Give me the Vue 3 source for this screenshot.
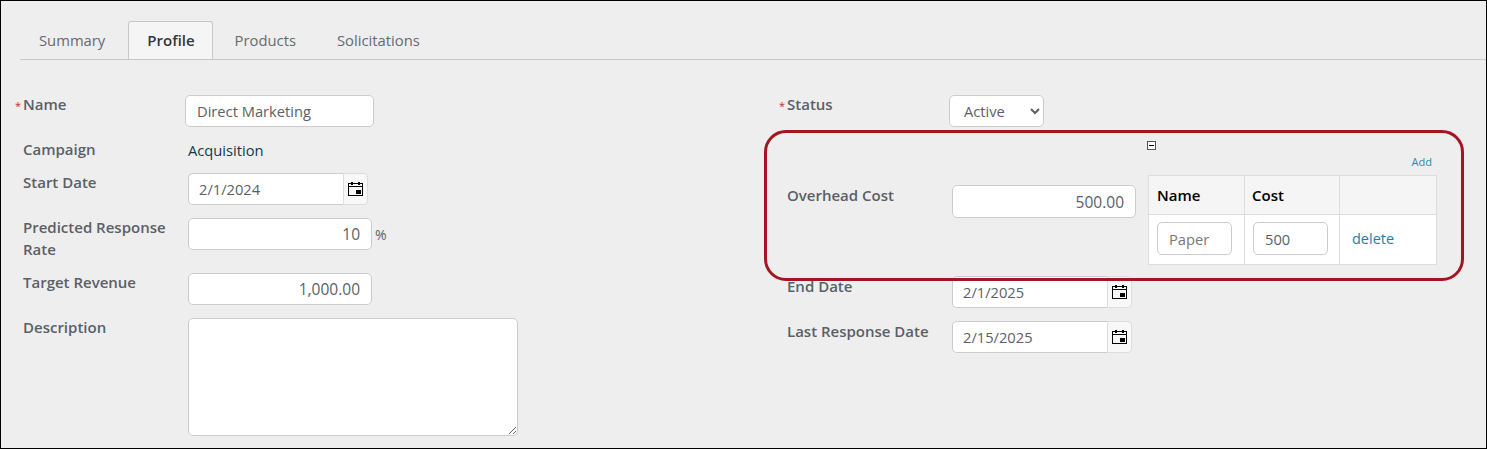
<script setup>
const rows = [{ name: 'Paper', cost: '500' }]
</script>

<template>
  <div class="frame">
    <nav class="tabs">
      <a class="tab">Summary</a>
      <a class="tab active">Profile</a>
      <a class="tab">Products</a>
      <a class="tab">Solicitations</a>
    </nav>
    <div class="form">
      <section class="col left">
        <div class="row">
          <label class="lbl req"><span class="star">*</span>Name</label>
          <input class="inp name-inp shift" value="Direct Marketing" />
        </div>
        <div class="row short">
          <label class="lbl">Campaign</label>
          <span class="static">Acquisition</span>
        </div>
        <div class="row">
          <label class="lbl">Start Date</label>
          <div class="date">
            <input class="inp" value="2/1/2024" />
            <button class="cal">
              <svg width="15" height="16" viewBox="0 0 15 16" fill="none" shape-rendering="crispEdges">
                <path d="M.5 2.5h14v12H.5z" stroke="#000" />
                <path d="M0 5.5h15" stroke="#000" />
                <path d="M3 1h2v3H3zM10 1h2v3h-2z" fill="#000" />
                <rect x="8" y="9" width="5" height="4" fill="#000" />
              </svg>
            </button>
          </div>
        </div>
        <div class="row">
          <label class="lbl">Predicted Response Rate</label>
          <input class="inp num w184" value="10" />
          <span class="pct">%</span>
        </div>
        <div class="row">
          <label class="lbl">Target Revenue</label>
          <input class="inp num w184" value="1,000.00" />
        </div>
        <div class="row">
          <label class="lbl">Description</label>
          <textarea class="area"></textarea>
        </div>
      </section>

      <section class="col right">
        <div class="row">
          <label class="lbl req"><span class="star">*</span>Status</label>
          <select class="sel shift">
            <option>Active</option>
            <option>Inactive</option>
          </select>
        </div>
        <div class="row overhead">
          <label class="lbl oh-lbl">Overhead Cost</label>
          <input class="inp num w184 oh-inp" value="500.00" />
          <div class="sub">
            <span class="toggle"></span>
            <a class="add">Add</a>
            <table class="grid">
              <thead>
                <tr><th class="c1">Name</th><th class="c2">Cost</th><th></th></tr>
              </thead>
              <tbody>
                <tr v-for="r in rows" :key="r.name">
                  <td><input class="inp cell" :placeholder="r.name" /></td>
                  <td><input class="inp cell" :value="r.cost" /></td>
                  <td class="del-cell"><a class="del">delete</a></td>
                </tr>
              </tbody>
            </table>
          </div>
        </div>
        <div class="row">
          <label class="lbl">End Date</label>
          <div class="date raised">
            <input class="inp" value="2/1/2025" />
            <button class="cal">
              <svg width="15" height="16" viewBox="0 0 15 16" fill="none" shape-rendering="crispEdges">
                <path d="M.5 2.5h14v12H.5z" stroke="#000" />
                <path d="M0 5.5h15" stroke="#000" />
                <path d="M3 1h2v3H3zM10 1h2v3h-2z" fill="#000" />
                <rect x="8" y="9" width="5" height="4" fill="#000" />
              </svg>
            </button>
          </div>
        </div>
        <div class="row">
          <label class="lbl">Last Response Date</label>
          <div class="date raised">
            <input class="inp" value="2/15/2025" />
            <button class="cal">
              <svg width="15" height="16" viewBox="0 0 15 16" fill="none" shape-rendering="crispEdges">
                <path d="M.5 2.5h14v12H.5z" stroke="#000" />
                <path d="M0 5.5h15" stroke="#000" />
                <path d="M3 1h2v3H3zM10 1h2v3h-2z" fill="#000" />
                <rect x="8" y="9" width="5" height="4" fill="#000" />
              </svg>
            </button>
          </div>
        </div>
      </section>
    </div>
    <div class="callout"></div>
  </div>
</template>

<style scoped>
.frame {
  position: relative;
  box-sizing: border-box;
  width: 1487px;
  height: 449px;
  overflow: hidden;
  background: #eeeeee;
  border: 1px solid #000;
  font-family: "Open Sans", sans-serif;
  font-size: 15px;
  color: #5a5f68;
}
.tabs {
  display: flex;
  gap: 3px;
  margin: 20px 0 0 19px;
  height: 38px;
  border-bottom: 1px solid #c8c8c8;
}
.tab {
  box-sizing: border-box;
  height: 38px;
  padding: 0 18px;
  line-height: 36px;
  font-size: 14.8px;
  color: #666a70;
  border: 1px solid transparent;
  border-bottom: 0;
}
.tab.active {
  margin-left: 1px;
  padding-right: 17px;
  font-size: 15px;
  font-weight: 600;
  color: #33363a;
  background: #f5f5f5;
  border-color: #c8c8c8;
  border-radius: 3px 3px 0 0;
}
.form {
  display: flex;
  padding: 35px 0 0 22px;
}
.col.left { width: 764px; }
.col.right { flex: 1; }
.row {
  display: flex;
  align-items: flex-start;
  margin-bottom: 13px;
}
.row.short { height: 20px; }
.lbl {
  flex: 0 0 165px;
  box-sizing: border-box;
  width: 165px;
  margin: -2px 0 0;
  padding-right: 20px;
  font-weight: 600;
  line-height: 22px;
  color: #5a5f68;
  position: relative;
}
.req { line-height: 19px; margin: 0; }
.star {
  position: absolute;
  left: -8px;
  top: 1px;
  color: #e0202a;
  font-weight: 400;
  font-size: 11px;
}
.static {
  line-height: 20px;
  font-size: 14.7px;
  color: #123b4a;
}
.inp {
  box-sizing: border-box;
  height: 32px;
  width: 154px;
  padding: 0 11px;
  border: 1px solid #cccccc;
  border-radius: 5px;
  background: #fff;
  font: 14.7px "Open Sans", sans-serif;
  color: #5a5f68;
  outline: none;
}
.shift { margin-left: -3px; }
.name-inp { width: 189px; }
.num { text-align: right; font-size: 15.5px; }
.w184 { width: 184px; }
.date { display: flex; width: 180px; }
.date.raised { margin: -1px 0 1px; }
.date .inp {
  flex: 1;
  min-width: 0;
  padding-left: 10px;
  border-right: 0;
  border-radius: 5px 0 0 5px;
}
.cal {
  box-sizing: border-box;
  width: 25px;
  height: 32px;
  padding: 0;
  display: flex;
  align-items: center;
  justify-content: center;
  background: #f8f8f8;
  border: 1px solid #ddd;
  border-radius: 0 4px 4px 0;
}
.pct { margin: 7px 0 0 3px; font-size: 14px; line-height: 20px; }
.area {
  box-sizing: border-box;
  display: block;
  width: 330px;
  height: 118px;
  border: 1px solid #cccccc;
  border-radius: 5px;
  background: #fff;
  outline: none;
}
.sel {
  box-sizing: border-box;
  width: 95px;
  height: 32px;
  padding: 0 0 0 10px;
  border: 1px solid #cccccc;
  border-radius: 5px;
  background: #fff;
  font: 14.7px "Open Sans", sans-serif;
  color: #5a5f68;
  outline: none;
}
.overhead {
  position: relative;
  height: 125px;
  margin-bottom: 12px;
}
.oh-lbl { margin-top: 44px; }
.oh-inp { margin-top: 45px; height: 33px; }
.sub {
  display: flex;
  flex-direction: column;
  width: 289px;
  margin-left: 12px;
}
.toggle {
  position: relative;
  box-sizing: border-box;
  display: block;
  width: 9px;
  height: 9px;
  margin-top: 1px;
  margin-left: -1px;
  border: 1px solid #555;
  background: #fff;
}
.toggle::after {
  content: "";
  position: absolute;
  left: 1px;
  right: 1px;
  top: 3px;
  height: 1px;
  background: #000;
}
.add {
  align-self: flex-end;
  margin: 6px 5px 0 0;
  height: 19px;
  font-size: 11px;
  line-height: 12px;
  color: #2d8bab;
}
.grid {
  width: 289px;
  height: 90px;
  border-collapse: collapse;
  table-layout: fixed;
  background: #fff;
}
.grid th, .grid td { border: 1px solid #dddddd; padding: 0 8px; text-align: left; }
.grid th {
  height: 38px;
  background: #f5f5f5;
  font-weight: 600;
  color: #000;
}
.grid th.c2 { padding-left: 7px; }
.c1 { width: 79px; }
.c2 { width: 79px; }
.cell { width: 75px; height: 33px; display: block; margin-bottom: 2px; }
.cell::placeholder { color: #777; opacity: 1; }
.grid .del-cell { padding-left: 12px; }
.del { display: block; margin-top: -2px; color: #1b7ea6; font-size: 14.5px; }
.callout {
  position: absolute;
  left: 763px;
  top: 129px;
  box-sizing: border-box;
  width: 700px;
  height: 151px;
  border: 3px solid #a31621;
  border-radius: 22px;
  pointer-events: none;
}
</style>
